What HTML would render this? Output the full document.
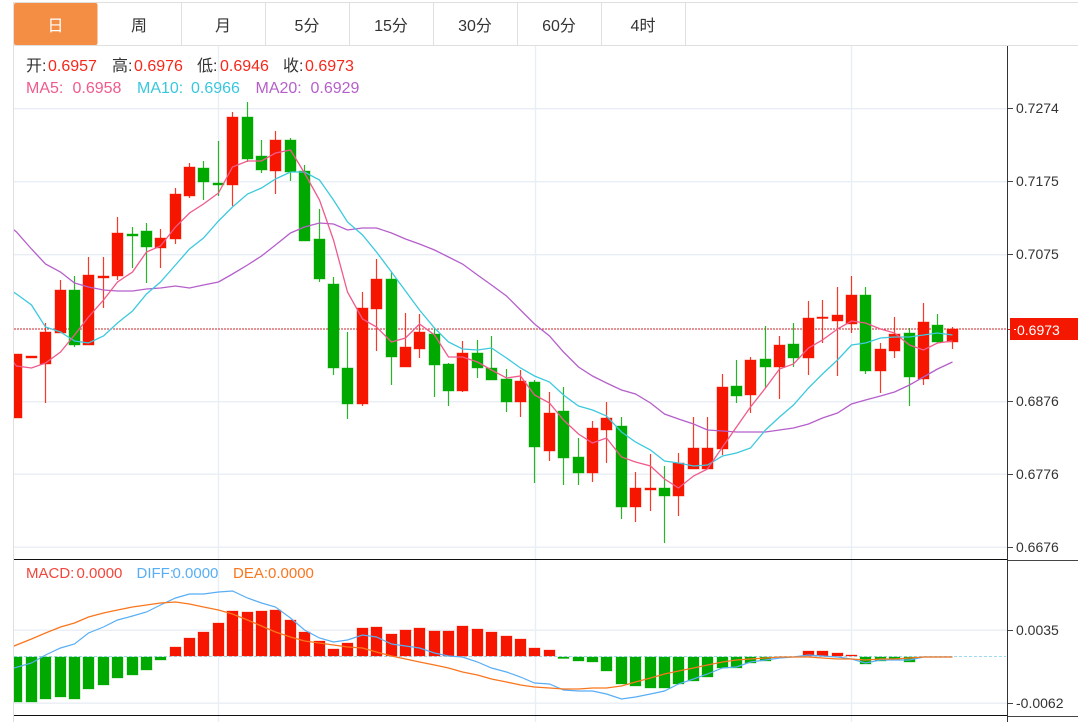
<!DOCTYPE html>
<html><head><meta charset="utf-8"><style>
html,body{margin:0;padding:0;background:#fff;width:1078px;height:722px;overflow:hidden}
svg{display:block}
text{font-family:"Liberation Sans","Noto Sans CJK SC",sans-serif}
</style></head><body>
<svg width="1078" height="722" viewBox="0 0 1078 722" xmlns="http://www.w3.org/2000/svg">
<defs><clipPath id="c"><rect x="14" y="46" width="993" height="676"/></clipPath></defs>
<rect width="1078" height="722" fill="#fff"/>
<!-- tabs -->
<path d="M13 2.5H1078M13 45.5H1078M13.5 2V722" stroke="#dfdfdf" stroke-width="1" fill="none"/>
<path d="M181.5 3V45M265.5 3V45M349.5 3V45M433.5 3V45M517.5 3V45M601.5 3V45M685.5 3V45" stroke="#dfdfdf" stroke-width="1" fill="none"/>
<rect x="14" y="3" width="83.5" height="42" rx="2" fill="#f58e45"/>
<g font-size="16" fill="#333" text-anchor="middle">
<text x="55.5" y="31" fill="#fff">日</text>
<text x="139" y="31">周</text>
<text x="223" y="31">月</text>
<text x="307" y="31">5分</text>
<text x="391" y="31">15分</text>
<text x="475" y="31">30分</text>
<text x="559" y="31">60分</text>
<text x="643" y="31">4时</text>
</g>
<!-- grid -->
<path d="M14 108.7H1007M14 181.7H1007M14 254.7H1007M14 401.7H1007M14 474.2H1007M14 547.2H1007M14 630.2H1007M14 703.2H1007M218.5 46V722M535.5 46V722M851.5 46V722" stroke="#e8eef5" stroke-width="1.4" fill="none"/>
<path d="M14 329H1007" stroke="#c8282a" stroke-width="1" stroke-dasharray="2 1" fill="none"/>
<g clip-path="url(#c)">
<!-- wicks -->
<path d="M45.5 323V403M60.5 280V333M88.5 257V345M103.5 257V308M117.5 217V280M160.5 229V268M175.5 188V244M189.5 163V198M232.5 112V206M275.5 131V194M362.5 292V406M376.5 259V351M405.5 313V367M419.5 314V358M462.5 341V392M520.5 370V417M549.5 392V461M592.5 421V482M606.5 402V463M635.5 472V522M650.5 454V511M678.5 453V516M693.5 417V469M707.5 417V469M722.5 374V455M750.5 357V413M779.5 336V399M808.5 301V375M822.5 300V343M837.5 287V376M851.5 276V333M880.5 343V393M894.5 317V358M923.5 303V385M952.5 327V349" stroke="#f61600" stroke-opacity=".85" stroke-width="1.2" fill="none"/>
<path d="M74.5 276V347M132.5 227V268M146.5 223V283M203.5 161V200M218.5 141V196M247.5 102V162M261.5 140V173M290.5 138V181M304.5 165V241M319.5 209V282M333.5 277V375M347.5 332V419M391.5 272V385M434.5 328V397M448.5 363V406M477.5 340V378M491.5 336V380M506.5 369V412M534.5 380V483M563.5 387V485M578.5 438V485M621.5 417V519M664.5 466V543M736.5 360V403M765.5 326V388M793.5 323V367M865.5 287V374M909.5 328V406M937.5 314V343" stroke="#00a900" stroke-opacity=".85" stroke-width="1.2" fill="none"/>
<!-- candle bodies -->
<path d="M11 354h11V418h-11zM26 356h11V358h-11zM40 332h11V364h-11zM55 290h11V333h-11zM83 275h11V345h-11zM98 276h11V278h-11zM112 233h11V276h-11zM155 238h11V248h-11zM170 194h11V239h-11zM184 167h11V196h-11zM227 117h11V185h-11zM270 140h11V171h-11zM357 308h11V404h-11zM371 279h11V309h-11zM400 347h11V367h-11zM414 332h11V349h-11zM457 353h11V391h-11zM515 381h11V402h-11zM544 413h11V451h-11zM587 428h11V473h-11zM601 418h11V430h-11zM630 488h11V507h-11zM645 488h11V490h-11zM673 463h11V496h-11zM688 448h11V469h-11zM702 448h11V469h-11zM717 387h11V449h-11zM745 360h11V395h-11zM774 345h11V367h-11zM803 318h11V358h-11zM817 317h11V318.5h-11zM832 315h11V321h-11zM846 295h11V324h-11zM875 349h11V371h-11zM889 334h11V351h-11zM918 322h11V379h-11zM947 329h11V342h-11z" fill="#f61600" stroke="#f61600" stroke-opacity=".4" stroke-width="1"/>
<path d="M69 290h11V345h-11zM127 234h11V236h-11zM141 231h11V247h-11zM198 168h11V182h-11zM213 183h11V185h-11zM242 117h11V159h-11zM256 156h11V170h-11zM285 140h11V172h-11zM299 171h11V241h-11zM314 239h11V279h-11zM328 284h11V368h-11zM342 368h11V404h-11zM386 279h11V357h-11zM429 334h11V365h-11zM443 364h11V391h-11zM472 353h11V368h-11zM486 368h11V380h-11zM501 379h11V402h-11zM529 382h11V447h-11zM558 411h11V458h-11zM573 457h11V473h-11zM616 426h11V507h-11zM659 488h11V496h-11zM731 386h11V396h-11zM760 359h11V367h-11zM788 344h11V358h-11zM860 295h11V371h-11zM904 333h11V377h-11zM932 325h11V342h-11z" fill="#00a900" stroke="#00a900" stroke-opacity=".4" stroke-width="1"/>
<!-- MA20 -->
<polyline fill="none" stroke="#b55fcb" stroke-width="1.3" points="2 220 16.5 232 31.5 249 45.5 264 60.5 272 74.5 283 88.5 287 103.5 290 117.5 291 132.5 291 146.5 289 160.5 288 175.5 286 189.5 288 203.5 285 218.5 282 232.5 274 247.5 265 261.5 256 275.5 245 290.5 233 304.5 227 319.5 223 333.5 224 347.5 230 362.5 228 376.5 228 391.5 233 405.5 239 419.5 244 434.5 250 448.5 257 462.5 264 477.5 275 491.5 285 506.5 296 520.5 310 534.5 324 549.5 336 563.5 352 578.5 367 592.5 376 606.5 383 621.5 390 635.5 394 650.5 403 664.5 414 678.5 419 693.5 424 707.5 430 722.5 431 736.5 432 750.5 432 765.5 432 779.5 430 793.5 428 808.5 424 822.5 418 837.5 413 851.5 404 865.5 400 880.5 396 894.5 392 909.5 385 923.5 377 937.5 369 952.5 362"/>
<!-- MA10 -->
<polyline fill="none" stroke="#3cc9de" stroke-width="1.3" points="2 285 16.5 294 31.5 305 45.5 327 60.5 332 74.5 341 88.5 343 103.5 336 117.5 323 132.5 311 146.5 294 160.5 282 175.5 265 189.5 249 203.5 238 218.5 221 232.5 207 247.5 194 261.5 188 275.5 179 290.5 172 304.5 172 319.5 180 333.5 200 347.5 222 362.5 235 376.5 252 391.5 272 405.5 291 419.5 310 434.5 328 448.5 342 462.5 349 477.5 350 491.5 348 506.5 358 520.5 368 534.5 376 549.5 382 563.5 395 578.5 406 592.5 410 606.5 416 621.5 432 635.5 442 650.5 450 664.5 461 678.5 463 693.5 466 707.5 465 722.5 456 736.5 453 750.5 448 765.5 430 779.5 417 793.5 405 808.5 388 822.5 374 837.5 360 851.5 345 865.5 343 880.5 338 894.5 337 909.5 337 923.5 335 937.5 333 952.5 335"/>
<!-- MA5 -->
<polyline fill="none" stroke="#ef5a8c" stroke-width="1.3" points="2 345 14 363 16.5 366 31.5 368 45.5 363 60.5 352 74.5 335 88.5 317 103.5 300 117.5 282 132.5 272 146.5 252 160.5 246 175.5 227 189.5 213 203.5 204 218.5 193 232.5 167 247.5 161 261.5 161 275.5 153 290.5 150 304.5 173 319.5 200 333.5 240 347.5 292 362.5 319 376.5 327 391.5 342 405.5 338 419.5 324 434.5 335 448.5 357 462.5 357 477.5 362 491.5 370 506.5 378 520.5 376 534.5 395 549.5 403 563.5 420 578.5 434 592.5 443 606.5 438 621.5 457 635.5 462 650.5 466 664.5 479 678.5 488 693.5 476 707.5 469 722.5 447 736.5 427 750.5 407 765.5 388 779.5 369 793.5 364 808.5 348 822.5 340 837.5 329 851.5 321 865.5 323 880.5 329 894.5 333 909.5 345 923.5 350 937.5 343 952.5 341"/>
<!-- MACD -->
<path d="M14 656.5H1006" stroke="#9ddcf0" stroke-width="1" stroke-dasharray="3 2" fill="none"/>
<path d="M170 647h11V656h-11zM184 638h11V656h-11zM198 632h11V656h-11zM213 623h11V656h-11zM227 611h11V656h-11zM242 612h11V656h-11zM256 611h11V656h-11zM270 610h11V656h-11zM285 620h11V656h-11zM299 632h11V656h-11zM314 641h11V656h-11zM328 649h11V656h-11zM342 643h11V656h-11zM357 628h11V656h-11zM371 627h11V656h-11zM386 634h11V656h-11zM400 630h11V656h-11zM414 628h11V656h-11zM429 631h11V656h-11zM443 631h11V656h-11zM457 626h11V656h-11zM472 629h11V656h-11zM486 632h11V656h-11zM501 636h11V656h-11zM515 639h11V656h-11zM529 648h11V656h-11zM544 650h11V656h-11zM803 651h11V656h-11zM817 651h11V656h-11zM832 653h11V656h-11zM846 655h11V656h-11z" fill="#f61600" stroke="#f61600" stroke-opacity=".3" stroke-width="1"/>
<path d="M11 657h11V702h-11zM26 657h11V702h-11zM40 657h11V699h-11zM55 657h11V697h-11zM69 657h11V699h-11zM83 657h11V689h-11zM98 657h11V685h-11zM112 657h11V678h-11zM127 657h11V675h-11zM141 657h11V670h-11zM155 657h11V660h-11zM558 657h11V658.5h-11zM573 657h11V661h-11zM587 657h11V662h-11zM601 657h11V671h-11zM616 657h11V684h-11zM630 657h11V686h-11zM645 657h11V688h-11zM659 657h11V688h-11zM673 657h11V684h-11zM688 657h11V681h-11zM702 657h11V677h-11zM717 657h11V668h-11zM731 657h11V668h-11zM745 657h11V663h-11zM760 657h11V661h-11zM860 657h11V664h-11zM875 657h11V661h-11zM889 657h11V660h-11zM904 657h11V662h-11z" fill="#00a900" stroke="#00a900" stroke-opacity=".3" stroke-width="1"/>
<polyline fill="none" stroke="#58aef5" stroke-width="1.2" points="2 672 14 668 31.5 663 45.5 655 60.5 648 74.5 644 88.5 633 103.5 627 117.5 620 132.5 616 146.5 612 160.5 605 175.5 598 189.5 594 203.5 594 218.5 592 232.5 591 247.5 598 261.5 603 275.5 607 290.5 618 304.5 630 319.5 638 333.5 642 347.5 640 362.5 635 376.5 637 391.5 644 405.5 646 419.5 648 434.5 653 448.5 656 462.5 657 477.5 662 491.5 668 506.5 672 520.5 677 534.5 683 549.5 684 563.5 690 578.5 691 592.5 691 606.5 694 621.5 699 635.5 697 650.5 694 664.5 691 678.5 684 693.5 679 707.5 674 722.5 668 736.5 667 750.5 662 765.5 660 779.5 658 793.5 657 808.5 655 822.5 656 837.5 657 851.5 659 865.5 663 880.5 660 894.5 660 909.5 660 923.5 657 937.5 657 952.5 657"/>
<polyline fill="none" stroke="#f9761e" stroke-width="1.3" points="2 651 14 646 31.5 639 45.5 633 60.5 627 74.5 623 88.5 617 103.5 613 117.5 610 132.5 607 146.5 605 160.5 603 175.5 602 189.5 604 203.5 607 218.5 610 232.5 614 247.5 620 261.5 626 275.5 632 290.5 637 304.5 641 319.5 643 333.5 645 347.5 647 362.5 648 376.5 652 391.5 656 405.5 659 419.5 662 434.5 665 448.5 668 462.5 672 477.5 675 491.5 679 506.5 682 520.5 685 534.5 687 549.5 688 563.5 689 578.5 689 592.5 688 606.5 688 621.5 686 635.5 682 650.5 678 664.5 674 678.5 671 693.5 668 707.5 665 722.5 662 736.5 660 750.5 659 765.5 658 779.5 657 793.5 657 808.5 657 822.5 658 837.5 659 851.5 659 865.5 660 880.5 659 894.5 659 909.5 658 923.5 657 937.5 657 952.5 657"/>
</g>
<!-- panel lines -->
<path d="M14 559.5H1007M14 715.5H1007" stroke="#111" stroke-width="1" fill="none"/>
<path d="M1007 560.5H1078M1007 716.5H1078" stroke="#444" stroke-width="1" fill="none"/>
<path d="M1007.5 46V722" stroke="#333" stroke-width="1" fill="none"/>
<path d="M1008 108.5h5M1008 181.5h5M1008 254.5h5M1008 401.5h5M1008 474.5h5M1008 547.5h5M1008 630.5h5M1008 703.5h5" stroke="#444" stroke-width="1" fill="none"/>
<!-- legend -->
<g font-size="16">
<g fill="#333"><text x="26" y="71">开:</text><text x="112" y="71">高:</text><text x="197" y="71">低:</text><text x="283" y="71">收:</text></g>
<g fill="#f5281c"><text x="48" y="71">0.6957</text><text x="134" y="71">0.6976</text><text x="220" y="71">0.6946</text><text x="305" y="71">0.6973</text></g>
<g fill="#ef5a8c"><text x="26" y="93">MA5:</text><text x="72.5" y="93">0.6958</text></g>
<g fill="#38c7de"><text x="137" y="93">MA10:</text><text x="191" y="93">0.6966</text></g>
<g fill="#b55fcb"><text x="255.5" y="93">MA20:</text><text x="310.5" y="93">0.6929</text></g>
</g>
<g font-size="15">
<g fill="#f2463c"><text x="26" y="578">MACD:</text><text x="76.5" y="578">0.0000</text></g>
<g fill="#58aef5"><text x="136.5" y="578">DIFF:</text><text x="172.5" y="578">0.0000</text></g>
<g fill="#f9761e"><text x="233" y="578">DEA:</text><text x="268" y="578">0.0000</text></g>
</g>
<!-- axis labels -->
<g font-size="14" fill="#333">
<text x="1016" y="113">0.7274</text>
<text x="1016" y="186">0.7175</text>
<text x="1016" y="259">0.7075</text>
<text x="1016" y="406">0.6876</text>
<text x="1016" y="479">0.6776</text>
<text x="1016" y="552">0.6676</text>
<text x="1016" y="635">0.0035</text>
<text x="1016" y="708">-0.0062</text>
</g>
<rect x="1010" y="318" width="68" height="22" fill="#f51800"/>
<path d="M1014 329.5h2" stroke="#fff" stroke-width="1"/>
<path d="M1008 329.5h2" stroke="#c8282a" stroke-width="1"/>
<text x="1017" y="335" font-size="14" fill="#fff">0.6973</text>
</svg>
</body></html>
